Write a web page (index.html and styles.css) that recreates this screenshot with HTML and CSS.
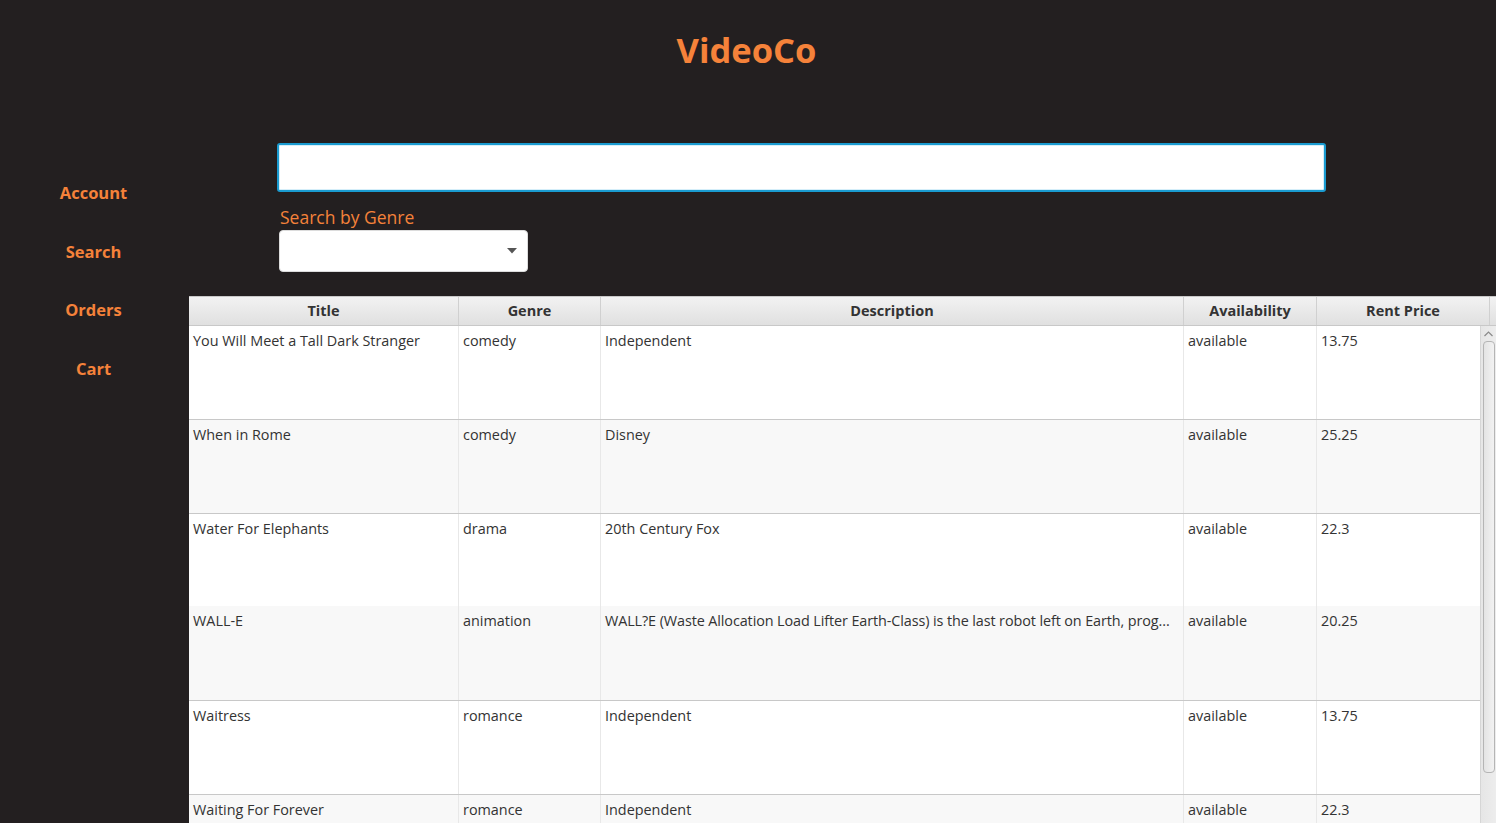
FILE: index.html
```html
<!DOCTYPE html>
<html>
<head>
<meta charset="utf-8">
<title>VideoCo</title>
<link rel="stylesheet" href="styles.css">
</head>
<body>
<header class="top">
  <h1 class="brand">VideoCo</h1>
</header>
<main class="main">
  <nav class="side">
    <a class="nav-item">Account</a>
    <a class="nav-item">Search</a>
    <a class="nav-item">Orders</a>
    <a class="nav-item">Cart</a>
  </nav>
  <section class="content">
    <div class="search-panel">
      <input class="search-input" type="text">
      <label class="genre-label">Search by Genre</label>
      <div class="combo">
        <svg class="combo-arrow" width="10" height="6" viewBox="0 0 10 6"><path d="M0 0 H10 L5 5.5 Z" fill="#555"/></svg>
      </div>
    </div>
    <div class="table">
      <div class="thead">
        <div class="th c1">Title</div>
        <div class="th c2">Genre</div>
        <div class="th c3">Description</div>
        <div class="th c4">Availability</div>
        <div class="th c5h">Rent Price</div>
        <div class="th corner"></div>
      </div>
      <div class="tbody">
        <div class="rows">
          <div class="row odd">
            <div class="td c1">You Will Meet a Tall Dark Stranger</div>
            <div class="td c2">comedy</div>
            <div class="td c3">Independent</div>
            <div class="td c4">available</div>
            <div class="td c5">13.75</div>
          </div>
          <div class="row even">
            <div class="td c1">When in Rome</div>
            <div class="td c2">comedy</div>
            <div class="td c3">Disney</div>
            <div class="td c4">available</div>
            <div class="td c5">25.25</div>
          </div>
          <div class="row odd noline">
            <div class="td c1">Water For Elephants</div>
            <div class="td c2">drama</div>
            <div class="td c3">20th Century Fox</div>
            <div class="td c4">available</div>
            <div class="td c5">22.3</div>
          </div>
          <div class="row even tall">
            <div class="td c1">WALL-E</div>
            <div class="td c2">animation</div>
            <div class="td c3 clip">WALL?E (Waste Allocation Load Lifter Earth-Class) is the last robot left on Earth, prog...</div>
            <div class="td c4">available</div>
            <div class="td c5">20.25</div>
          </div>
          <div class="row odd">
            <div class="td c1">Waitress</div>
            <div class="td c2">romance</div>
            <div class="td c3">Independent</div>
            <div class="td c4">available</div>
            <div class="td c5">13.75</div>
          </div>
          <div class="row even">
            <div class="td c1">Waiting For Forever</div>
            <div class="td c2">romance</div>
            <div class="td c3">Independent</div>
            <div class="td c4">available</div>
            <div class="td c5">22.3</div>
          </div>
        </div>
        <div class="vscroll">
          <div class="vs-up">
            <svg width="9" height="6" viewBox="0 0 9 6"><path d="M0.5 5 L4.5 1 L8.5 5" fill="none" stroke="#8a8a8a" stroke-width="1.2"/></svg>
          </div>
          <div class="vs-thumb"></div>
        </div>
      </div>
    </div>
  </section>
</main>
</body>
</html>
```

FILE: styles.css
```css
html, body {
  margin: 0;
  padding: 0;
  height: 100%;
  overflow: hidden;
}
body {
  background: #231f20;
  font-family: "Open Sans", "Noto Sans", sans-serif;
  color: #333;
}
.top {
  height: 100px;
  display: flex;
  justify-content: center;
  align-items: flex-start;
}
.brand {
  margin: 27px 0 0 -3px;
  font-size: 34.5px;
  line-height: 46px;
  font-weight: 700;
  color: #f5823a;
}
.main {
  display: flex;
  height: 723px;
}
.side {
  width: 189px;
  flex: none;
  display: flex;
  flex-direction: column;
  align-items: center;
  padding: 64px 2px 0 0;
  box-sizing: border-box;
}
.nav-item {
  height: 58.7px;
  line-height: 58.7px;
  font-size: 16.5px;
  font-weight: 700;
  color: #f5823a;
  text-align: center;
  cursor: pointer;
}
.content {
  flex: 1;
  display: flex;
  flex-direction: column;
  min-width: 0;
}
.search-panel {
  height: 196px;
  padding: 43px 0 0 88px;
  box-sizing: border-box;
  display: flex;
  flex-direction: column;
  align-items: flex-start;
}
.search-input {
  width: 1049px;
  height: 49px;
  box-sizing: border-box;
  margin: 0;
  border: 2px solid #1a9bd0;
  box-shadow: inset 0 0 0 1px #d5eef9;
  border-radius: 3px;
  background: #fff;
  outline: none;
}
.genre-label {
  margin: 13px 0 0 3px;
  font-size: 17.5px;
  line-height: 24px;
  color: #f5823a;
}
.combo {
  margin: 1px 0 0 2px;
  width: 249px;
  height: 42px;
  background: #fff;
  border-radius: 4px;
  border: 1px solid #dcdcdc;
  box-sizing: border-box;
  display: flex;
  align-items: center;
  justify-content: flex-end;
  padding-right: 10px;
}
.combo-arrow {
  display: block;
}
.table {
  flex: 1;
  display: flex;
  flex-direction: column;
  min-height: 0;
  background: #fff;
}
.thead {
  display: flex;
  height: 30px;
  flex: none;
  background: linear-gradient(#f2f2f2, #e0e0e0);
  border-top: 1px solid #c8c8c8;
  border-bottom: 1px solid #c8c8c8;
  box-sizing: border-box;
}
.th {
  font-size: 14.5px;
  font-weight: 700;
  color: #333;
  text-align: center;
  line-height: 28px;
  border-right: 1px solid #d0d0d0;
  box-sizing: border-box;
  flex: none;
}
.c1 { width: 270px; }
.c2 { width: 142px; }
.c3 { width: 583px; }
.c4 { width: 133px; }
.c5 { width: 163px; }
.c5h { width: 173px; }
.th.corner { flex: 1; border-right: none; }
.tbody {
  flex: 1;
  display: flex;
  min-height: 0;
  overflow: hidden;
}
.rows {
  width: 1291px;
  flex: none;
}
.row {
  display: flex;
  height: 94px;
  box-sizing: border-box;
  border-bottom: 1px solid #c8c8c8;
}
.row.noline { height: 92px; border-bottom: none; }
.row.tall { height: 95px; }
.row.odd { background: #fff; }
.row.even { background: #f8f8f8; }
.td {
  flex: none;
  box-sizing: border-box;
  border-right: 1px solid #e8e8e8;
  padding: 5px 4px 0 4px;
  font-size: 14.4px;
  line-height: 20px;
  color: #333;
  white-space: nowrap;
  overflow: hidden;
}
.td.clip { text-overflow: ellipsis; letter-spacing: -0.1px; }
.td.c5 { border-right: none; }
.vscroll {
  flex: 1;
  background: linear-gradient(90deg, #e6e6e6, #ededed);
  border-left: 1px solid #d6d6d6;
  display: flex;
  flex-direction: column;
  align-items: center;
}
.vs-up {
  height: 15px;
  display: flex;
  align-items: center;
  justify-content: center;
}
.vs-thumb {
  width: 12px;
  height: 432px;
  box-sizing: border-box;
  border: 1px solid #b5b5b5;
  border-radius: 4px;
  background: linear-gradient(90deg, #e4e4e4, #f2f2f2);
}
```
